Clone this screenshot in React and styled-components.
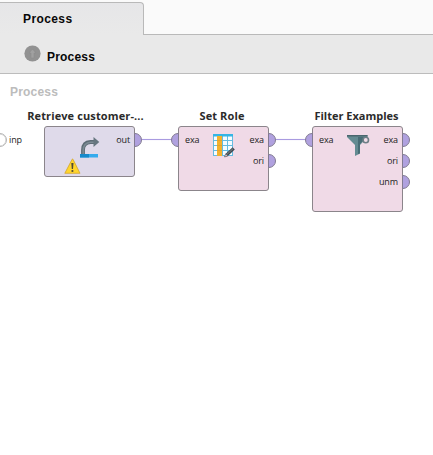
import React from 'react';
import styled, { createGlobalStyle } from 'styled-components';

const GlobalStyle = createGlobalStyle`
  * { box-sizing: border-box; }
  body { margin: 0; background: #fff; overflow: hidden; }
`;

const Panel = styled.main`
  display: flex;
  flex-direction: column;
  width: 433px;
  height: 455px;
  background: #fff;
  font-family: 'Liberation Sans', Arial, sans-serif;
`;

const TabBar = styled.header`
  display: flex;
  align-items: flex-end;
  height: 35px;
  background: #fafafa;
  box-shadow: inset 0 -1px #b9b9b9;
`;

const Tab = styled.div`
  display: flex;
  align-items: center;
  width: 144px;
  height: 33px;
  padding: 0 0 1px 23px;
  border: 1px solid #b9b9b9;
  border-width: 1px 1px 0 0;
  border-top-right-radius: 4px;
  background: linear-gradient(#e6e6e8, #e9e9e9);
`;

const Heading = styled.span`
  font-size: 12px;
  font-weight: 700;
  line-height: 14px;
  letter-spacing: ${({ $spacing = 0.2 }) => $spacing}px;
  color: ${({ $muted }) => ($muted ? '#bcbcbc' : '#080808')};
`;

const Breadcrumb = styled.nav`
  display: flex;
  align-items: flex-end;
  gap: 6px;
  height: 39px;
  padding: 0 0 9px 24px;
  border-bottom: 1px solid #bcbcbc;
  background: #e9e9e9;

  svg { margin-bottom: 2px; }
`;

const Canvas = styled.section`
  position: relative;
  display: flex;
  flex: 1;
  flex-direction: column;
  align-items: flex-start;
  padding-top: 11px;

  > ${Heading} { padding-left: 10px; }
`;

const Operator = styled.article`
  position: absolute;
  left: ${({ $x }) => $x}px;
  top: 34px;
  display: flex;
  flex-direction: column;
  gap: 3px;
  width: 91px;
`;

const Title = styled.h2`
  display: flex;
  justify-content: center;
  height: 15px;
  margin: 0 ${({ $shift }) => $shift * 2}px 0 0;
  font: 700 11px/15px 'Open Sans', sans-serif;
  letter-spacing: ${({ $spacing }) => $spacing}px;
  white-space: nowrap;
  color: #2b2b2b;
`;

const Body = styled.div`
  display: grid;
  grid-template-columns: 1fr 24px 1fr;
  height: ${({ $height }) => $height}px;
  padding-top: 6px;
  border: 1px solid #8b858b;
  border-radius: 3px;
  background: ${({ $tone }) => $tone};
`;

const PortList = styled.div`
  display: flex;
  flex-direction: column;
  gap: 7px;
  margin: ${({ $side }) => ($side === 'left' ? '0 0 0 -8px' : '0 -8px 0 0')};
`;

const PortRow = styled.div`
  display: flex;
  flex-direction: ${({ $side }) => ($side === 'left' ? 'row' : 'row-reverse')};
  gap: ${({ $side }) => ($side === 'left' ? 6 : 4)}px;
  height: 14px;
`;

const Port = styled.span`
  flex: none;
  width: 8px;
  height: 14px;
  border: 1px solid #827b91;
  border-radius: ${({ $side }) => ($side === 'left' ? '7px 0 0 7px' : '0 7px 7px 0')};
  background: #b0a1df;
`;

const PortLabel = styled.span`
  font: 9px/14px 'Open Sans', sans-serif;
  letter-spacing: -0.1px;
  color: #1c1c1c;
`;

const ProcessInput = styled.div`
  display: flex;
  gap: 2px;
  margin: 34px 0 0 -7px;
`;

const Inlet = styled.span`
  width: 14px;
  height: 14px;
  border: 1.5px solid #b5b5b5;
  border-radius: 50%;
  box-shadow: inset 0 0 0 0.5px #c6c6c6;
`;

const Wire = styled.span`
  position: absolute;
  left: ${({ $x }) => $x}px;
  top: 65px;
  width: 30px;
  height: 1px;
  background: #a99be0;
  box-shadow: 0 0 1px #c9c0ef;
`;

const Picture = styled.div`
  display: flex;
  justify-content: center;
  padding-top: 1px;

  svg { flex: none; overflow: visible; }
`;

const WarningBadge = styled.svg`
  position: absolute;
  left: 20px;
  bottom: 2px;
`;

const UpIcon = () => (
  <svg width="17" height="17" viewBox="0 0 17 17">
    <circle cx="8.5" cy="8.5" r="8.1" fill="#929292" />
    <path d="M8.5 4 12 8h-2v5H7V8H5Z" fill="#a0a0a0" stroke="#888" strokeWidth=".5" />
  </svg>
);

const RetrieveIcon = () => (
  <svg width="20" height="25" viewBox="0 -3 20 25">
    <path d="M3 17V13Q3 5.5 10.5 5H14" fill="none" stroke="#5d6c75" strokeWidth="3.8" />
    <path d="M3.2 17V13Q3.5 6 10.5 5.2H14" fill="none" stroke="#7c8b94" strokeWidth="1.6" />
    <path d="m13.5 0 5.8 5-5.8 5Z" fill="#66767f" />
    <path d="M0 17h18v3.5H0Z" fill="#35abed" />
    <path d="M0 17h9v3.5H0Z" fill="#168acb" />
  </svg>
);

const Warning = () => (
  <WarningBadge width="17" height="17" viewBox="0 0 17 17">
    <path d="M8.2 1.2Q8.6.8 9 1.3L16 15.3H.8Z" fill="#ffd52d" stroke="#d2a52c" strokeWidth=".8" strokeLinejoin="round" />
    <path d="M7.3 5h2.2L9 11H7.8Z" fill="#504a35" />
    <circle cx="8.4" cy="13" r="1.1" fill="#504a35" />
  </WarningBadge>
);

const TableIcon = () => (
  <svg width="23" height="25" viewBox="-1 0 23 25">
    <path d="M.5 1h19v21H.5Z" fill="#f5fcff" />
    <path d="M.5 6.5h19M.5 11.5h19M.5 16.5h19M.5 21.5h19M.5 1v21M4.5 1v21M9.5 1v21M14.5 1v21M19.5 1v21" fill="none" stroke="#65bbe0" />
    <path d="M0 0h20v2.5H0Z" fill="#35b5e4" />
    <path d="M4 2h5v20H4Z" fill="#f3b12e" />
    <path d="M4 6.5h5M4 11.5h5M4 16.5h5" stroke="#e7a12a" />
    <path d="m11.5 23 1.2-3.2 6.9-6.6 2.2 2.2-6.9 6.7Z" fill="#3d4850" />
    <path d="m14 20.3 6-5.6" stroke="#7d8589" />
    <path d="m11.5 23 1.2-3.2 2 2.3Z" fill="#f1d8df" stroke="#444d53" strokeWidth=".5" />
  </svg>
);

const FilterIcon = () => (
  <svg width="24" height="23" viewBox="0 0 24 23">
    <path d="M1 1h20.5v2L14 11v8.5L9 22V11L1 3Z" fill="#648b92" />
    <path d="M12 3h8l-6 7v9.3L12 20.3Z" fill="#486d76" />
    <path d="M1 1h20.5v1.5H1Z" fill="#4a666e" />
    <circle cx="19.8" cy="6" r="2.7" fill="#f0dce7" stroke="#6d7e86" strokeWidth="1.6" />
  </svg>
);

const operators = [
  { title: 'Retrieve customer-...', spacing: 0.12, shift: 4, x: 44, height: 51, tone: '#dfdaea', inputs: [], outputs: ['out'], Icon: RetrieveIcon, warning: true },
  { title: 'Set Role', spacing: 0.12, shift: 1.5, x: 178, height: 65, tone: '#f0dae7', inputs: ['exa'], outputs: ['exa', 'ori'], Icon: TableIcon },
  { title: 'Filter Examples', spacing: 0, shift: 1, x: 312, height: 86, tone: '#f0dae7', inputs: ['exa'], outputs: ['exa', 'ori', 'unm'], Icon: FilterIcon },
];

const Ports = ({ side, labels }) => (
  <PortList $side={side}>
    {labels.map((label) => (
      <PortRow key={label} $side={side}>
        <Port $side={side} />
        <PortLabel>{label}</PortLabel>
      </PortRow>
    ))}
  </PortList>
);

export default function App() {
  return (
    <Panel>
      <GlobalStyle />
      <TabBar>
        <Tab><Heading $spacing={0.4}>Process</Heading></Tab>
      </TabBar>
      <Breadcrumb>
        <UpIcon />
        <Heading>Process</Heading>
      </Breadcrumb>
      <Canvas>
        <Heading $muted>Process</Heading>
        <ProcessInput>
          <Inlet />
          <PortLabel>inp</PortLabel>
        </ProcessInput>
        <Wire $x={142} />
        <Wire $x={276} />
        {operators.map(({ title, spacing, shift, x, height, tone, inputs, outputs, Icon, warning }) => (
          <Operator key={title} $x={x}>
            <Title $spacing={spacing} $shift={shift}>{title}</Title>
            <Body $height={height} $tone={tone}>
              <Ports side="left" labels={inputs} />
              <Picture><Icon /></Picture>
              <Ports side="right" labels={outputs} />
            </Body>
            {warning && <Warning />}
          </Operator>
        ))}
      </Canvas>
    </Panel>
  );
}
